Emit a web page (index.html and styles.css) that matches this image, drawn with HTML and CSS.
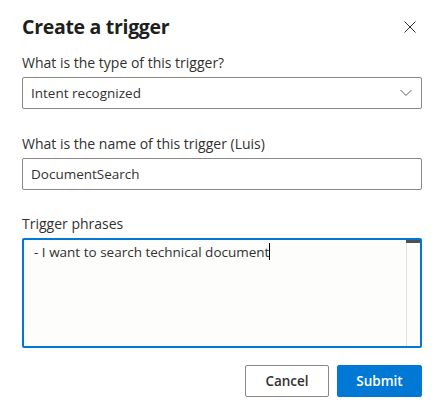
FILE: index.html
```html
<!DOCTYPE html>
<html lang="en">
<head>
<meta charset="utf-8">
<title>Create a trigger</title>
<link rel="stylesheet" href="styles.css">
</head>
<body>
<div class="dialog">
  <div class="header">
    <h1 class="title">Create a trigger</h1>
    <button class="close" aria-label="Close">
      <svg width="12" height="12" viewBox="0 0 12 12"><path d="M0.5 0.5 L11.5 11.5 M11.5 0.5 L0.5 11.5" stroke="#323130" stroke-width="1" fill="none"/></svg>
    </button>
  </div>

  <div class="field">
    <label class="label">What is the type of this trigger?</label>
    <div class="select">
      <span class="select-text">Intent recognized</span>
      <svg class="chevron" width="12" height="8" viewBox="0 0 12 8"><path d="M0.5 1 L6 6.5 L11.5 1" stroke="#605e5c" stroke-width="1" fill="none"/></svg>
    </div>
  </div>

  <div class="field">
    <label class="label">What is the name of this trigger (Luis)</label>
    <div class="input">DocumentSearch</div>
  </div>

  <div class="field">
    <label class="label">Trigger phrases</label>
    <div class="textarea">
      <div class="textarea-text">- I want to search technical document<span class="caret"></span></div>
      <div class="scrollbar"><div class="thumb"></div></div>
    </div>
  </div>

  <div class="footer">
    <button class="btn btn-default">Cancel</button>
    <button class="btn btn-primary">Submit</button>
  </div>
</div>
</body>
</html>
```

FILE: styles.css
```css
* { box-sizing: border-box; }
html, body {
  margin: 0;
  background: #ffffff;
}
body {
  font-family: "Open Sans", "Noto Sans", "Liberation Sans", sans-serif;
  color: #323130;
}
.dialog {
  width: 445px;
  padding: 12px 23px 0 22px;
}
.header {
  display: flex;
  justify-content: space-between;
  align-items: flex-start;
  height: 41px;
}
.title {
  margin: 0;
  font-size: 19.5px;
  line-height: 30px;
  font-weight: 700;
  color: #201f1e;
  letter-spacing: -0.3px;
}
.close {
  border: 0;
  background: none;
  padding: 0;
  margin: 9px 6px 0 0;
  width: 12px;
  height: 12px;
  display: flex;
}
.field {
  display: flex;
  flex-direction: column;
}
.label {
  font-size: 14px;
  line-height: 20px;
  font-weight: 400;
  color: #323130;
  margin-bottom: 4px;
}
.select, .input {
  height: 32px;
  border: 1px solid #8a8886;
  border-radius: 2px;
  display: flex;
  align-items: center;
  padding: 0 8px 0 8px;
  font-size: 13.5px;
  color: #323130;
}
.select {
  justify-content: space-between;
  margin-bottom: 25px;
}
.chevron { margin-right: 1px; }
.input { margin-bottom: 24px; }
.textarea {
  height: 110px;
  border: 2px solid #0078d4;
  border-radius: 2px;
  display: flex;
  background: #fdfdfc;
}
.textarea-text {
  flex: 1;
  padding: 2px 10px;
  font-size: 13.5px;
  line-height: 20px;
  color: #323130;
}
.caret {
  display: inline-block;
  width: 1px;
  height: 17px;
  background: #000;
  vertical-align: -3px;
}
.scrollbar {
  width: 14px;
  border-left: 1px solid #e1e1e1;
  background: #fdfdfc;
}
.thumb {
  height: 3px;
  background: #505050;
  margin-left: -1px;
}
.footer {
  display: flex;
  justify-content: flex-end;
  gap: 8px;
  margin-top: 17px;
}
.btn {
  height: 32px;
  border-radius: 2px;
  font-family: inherit;
  font-size: 13.5px;
  font-weight: 600;
  padding: 0;
}
.btn-default {
  width: 84px;
  background: #ffffff;
  border: 1px solid #8a8886;
  color: #323130;
}
.btn-primary {
  width: 85px;
  background: #0078d4;
  border: 1px solid #0078d4;
  color: #ffffff;
}
```
